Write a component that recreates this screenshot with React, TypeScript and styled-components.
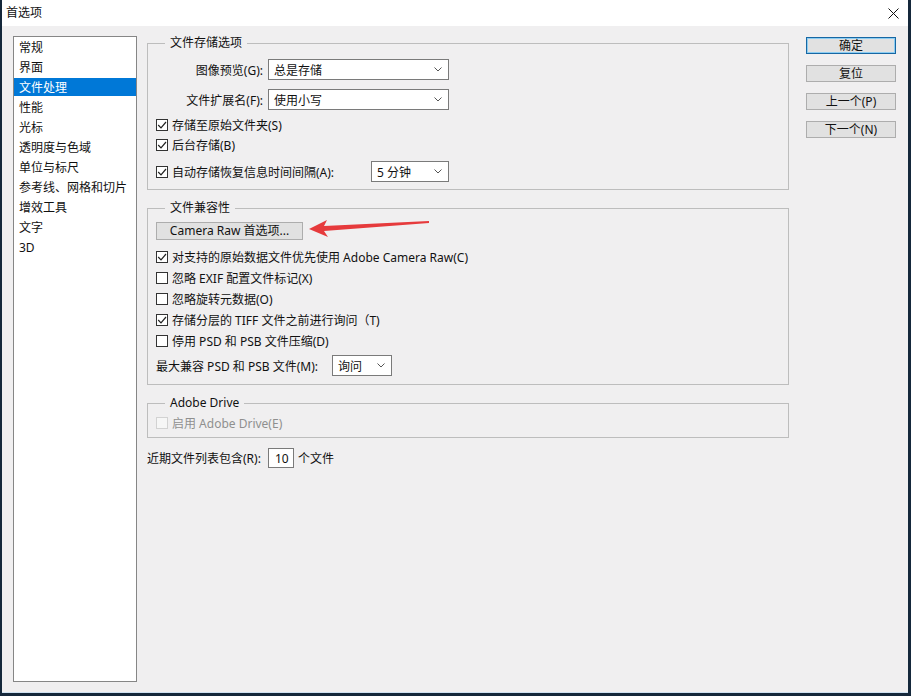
import React from 'react';
import styled, { createGlobalStyle } from 'styled-components';

const GlobalStyle = createGlobalStyle`
  html, body {
    margin: 0;
    padding: 0;
    background: #15283b;
  }
  body {
    font-family: "Noto Sans", "Noto Sans CJK SC", sans-serif;
    font-size: 12px;
    color: #111;
  }
  * { box-sizing: border-box; }
`;

const Frame = styled.div`
  width: 911px;
  height: 696px;
  background: #15283b;
  padding: 0 3px 3px 2px;
`;

const Window = styled.div`
  height: 100%;
  background: #f0eff0;
  display: flex;
  flex-direction: column;
  border-bottom: 1px solid #cfe2f2;
`;

const TitleBar = styled.div`
  height: 26px;
  flex: none;
  background: #fff;
  display: flex;
  align-items: center;
  justify-content: space-between;
  padding: 0 9px 0 4px;
`;

const Title = styled.span`
  font-size: 12px;
  line-height: 14px;
`;

const CloseButton = styled.div`
  width: 11px;
  height: 11px;
  display: flex;
`;

const Body = styled.div`
  flex: 1;
  display: flex;
  padding: 10px 11px 10px 11px;
`;

const NavList = styled.div`
  width: 124px;
  flex: none;
  background: #fff;
  border: 1px solid #868686;
  padding-top: 1px;
`;

const NavItem = styled.div<{ $active?: boolean }>`
  height: 18px;
  line-height: 16px;
  padding-top: 2px;
  margin-bottom: 2px;
  padding-left: 5px;
  white-space: nowrap;
  background: ${p => (p.$active ? '#0078d7' : 'transparent')};
  color: ${p => (p.$active ? '#fff' : '#111')};
`;

const Main = styled.div`
  width: 642px;
  flex: none;
  margin-left: 10px;
  position: relative;
  display: flex;
  flex-direction: column;
`;

const Side = styled.div`
  width: 90px;
  flex: none;
  margin-left: 17px;
  padding-top: 1px;
  display: flex;
  flex-direction: column;
  gap: 11px;
`;

const Group = styled.fieldset<{ $mt?: number; $pt: number; $pb: number }>`
  margin: ${p => p.$mt ?? 0}px 0 0 0;
  padding: ${p => p.$pt}px 8px ${p => p.$pb}px 8px;
  border: 1px solid #bdbdbd;
  min-width: 0;
  display: flex;
  flex-direction: column;
`;

const Legend = styled.legend`
  margin-left: 9px;
  padding: 0 5px;
  line-height: 14px;
  font-size: 12px;
`;

const Row = styled.div<{ $mt?: number; $h?: number }>`
  display: flex;
  align-items: center;
  height: ${p => p.$h ?? 20}px;
  margin-top: ${p => p.$mt ?? 0}px;
  white-space: nowrap;
`;

const FieldLabel = styled.span<{ $w?: number; $align?: string }>`
  width: ${p => (p.$w ? `${p.$w}px` : 'auto')};
  flex: none;
  text-align: ${p => p.$align ?? 'left'};
  margin-right: 5px;
  white-space: nowrap;
`;

const SelectBox = styled.div<{ $w: number }>`
  width: ${p => p.$w}px;
  height: 21px;
  flex: none;
  background: #fff;
  border: 1px solid #7a7a7a;
  display: flex;
  align-items: center;
  justify-content: space-between;
  padding: 0 6px 0 5px;
`;

const TextInput = styled.div`
  width: 26px;
  height: 20px;
  flex: none;
  background: #fff;
  border: 1px solid #7a7a7a;
  display: flex;
  align-items: center;
  padding-left: 6px;
  margin-right: 4px;
`;

const CheckItem = styled.label<{ $w?: number; $disabled?: boolean }>`
  display: flex;
  align-items: center;
  width: ${p => (p.$w ? `${p.$w}px` : 'auto')};
  flex: none;
  color: ${p => (p.$disabled ? '#8f8f8f' : '#111')};
`;

const Box = styled.span<{ $disabled?: boolean }>`
  width: 12px;
  height: 12px;
  flex: none;
  background: ${p => (p.$disabled ? '#f6f6f6' : '#fff')};
  border: 1px solid ${p => (p.$disabled ? '#d2d2d2' : '#333')};
  margin-right: 4px;
  display: flex;
  align-items: center;
  justify-content: center;
`;

const PushButton = styled.div<{ $w?: number; $h?: number; $default?: boolean }>`
  width: ${p => (p.$w ? `${p.$w}px` : '100%')};
  height: ${p => p.$h ?? 17}px;
  flex: none;
  background: #e1e1e1;
  border: 1px solid ${p => (p.$default ? '#1767a3' : '#adadad')};
  box-shadow: ${p => (p.$default ? 'inset 0 0 0 1px #8ccdf2' : 'none')};
  display: flex;
  align-items: center;
  justify-content: center;
  white-space: nowrap;
  line-height: 14px;
`;

const Arrow = styled.svg`
  position: absolute;
  left: 158px;
  top: 180px;
  width: 130px;
  height: 26px;
`;

const Chevron = () => (
  <svg width="8" height="5" viewBox="0 0 8 5">
    <path d="M0.5 0.5 L4 4 L7.5 0.5" fill="none" stroke="#555" strokeWidth="1" />
  </svg>
);

const Check = ({ checked, disabled }: { checked?: boolean; disabled?: boolean }) => (
  <Box $disabled={disabled}>
    {checked && (
      <svg width="10" height="10" viewBox="0 0 10 10">
        <path d="M1.2 5 L4 7.8 L9 2" fill="none" stroke="#222" strokeWidth="1.2" />
      </svg>
    )}
  </Box>
);

const navItems = ['常规', '界面', '文件处理', '性能', '光标', '透明度与色域', '单位与标尺', '参考线、网格和切片', '增效工具', '文字', '3D'];

const compatChecks = [
  { text: '对支持的原始数据文件优先使用 Adobe Camera Raw(C)', checked: true },
  { text: '忽略 EXIF 配置文件标记(X)', checked: false },
  { text: '忽略旋转元数据(O)', checked: false },
  { text: '存储分层的 TIFF 文件之前进行询问（T)', checked: true },
  { text: '停用 PSD 和 PSB 文件压缩(D)', checked: false },
];

export default function App() {
  return (
    <>
      <GlobalStyle />
      <Frame>
        <Window>
          <TitleBar>
            <Title>首选项</Title>
            <CloseButton>
              <svg width="11" height="11" viewBox="0 0 11 11">
                <path d="M0.5 0.5 L10.5 10.5 M10.5 0.5 L0.5 10.5" stroke="#111" strokeWidth="1" />
              </svg>
            </CloseButton>
          </TitleBar>
          <Body>
            <NavList>
              {navItems.map(item => (
                <NavItem key={item} $active={item === '文件处理'}>{item}</NavItem>
              ))}
            </NavList>

            <Main>
              <Group $pt={9} $pb={7}>
                <Legend>文件存储选项</Legend>
                <Row $h={21}>
                  <FieldLabel $w={107} $align="right">图像预览(G):</FieldLabel>
                  <SelectBox $w={181}><span>总是存储</span><Chevron /></SelectBox>
                </Row>
                <Row $h={21} $mt={9}>
                  <FieldLabel $w={107} $align="right">文件扩展名(F):</FieldLabel>
                  <SelectBox $w={181}><span>使用小写</span><Chevron /></SelectBox>
                </Row>
                <Row $mt={5}>
                  <CheckItem><Check checked />存储至原始文件夹(S)</CheckItem>
                </Row>
                <Row>
                  <CheckItem><Check checked />后台存储(B)</CheckItem>
                </Row>
                <Row $h={21} $mt={6}>
                  <CheckItem $w={215}><Check checked />自动存储恢复信息时间间隔(A):</CheckItem>
                  <SelectBox $w={78}><span>5 分钟</span><Chevron /></SelectBox>
                </Row>
              </Group>

              <Group $mt={11} $pt={7} $pb={8}>
                <Legend>文件兼容性</Legend>
                <Row $h={18}>
                  <PushButton $w={147} $h={18}>Camera Raw 首选项...</PushButton>
                </Row>
                {compatChecks.map((c, i) => (
                  <Row key={c.text} $h={21} $mt={i === 0 ? 6 : 0}>
                    <CheckItem><Check checked={c.checked} />{c.text}</CheckItem>
                  </Row>
                ))}
                <Row $h={21} $mt={4}>
                  <FieldLabel $w={171}>最大兼容 PSD 和 PSB 文件(M):</FieldLabel>
                  <SelectBox $w={60}><span>询问</span><Chevron /></SelectBox>
                </Row>
              </Group>

              <Group $mt={11} $pt={3} $pb={4}>
                <Legend>Adobe Drive</Legend>
                <Row>
                  <CheckItem $disabled><Check disabled />启用 Adobe Drive(E)</CheckItem>
                </Row>
              </Group>

              <Row $mt={10}>
                <FieldLabel $w={116}>近期文件列表包含(R):</FieldLabel>
                <TextInput>10</TextInput>
                <span>个文件</span>
              </Row>

              <Arrow viewBox="0 0 130 26">
                <polygon points="4,13 22,4 19,10 124,5 124,7 19,15 23,21" fill="#e63a3c" />
              </Arrow>
            </Main>

            <Side>
              <PushButton $default>确定</PushButton>
              <PushButton>复位</PushButton>
              <PushButton>上一个(P)</PushButton>
              <PushButton>下一个(N)</PushButton>
            </Side>
          </Body>
        </Window>
      </Frame>
    </>
  );
}
